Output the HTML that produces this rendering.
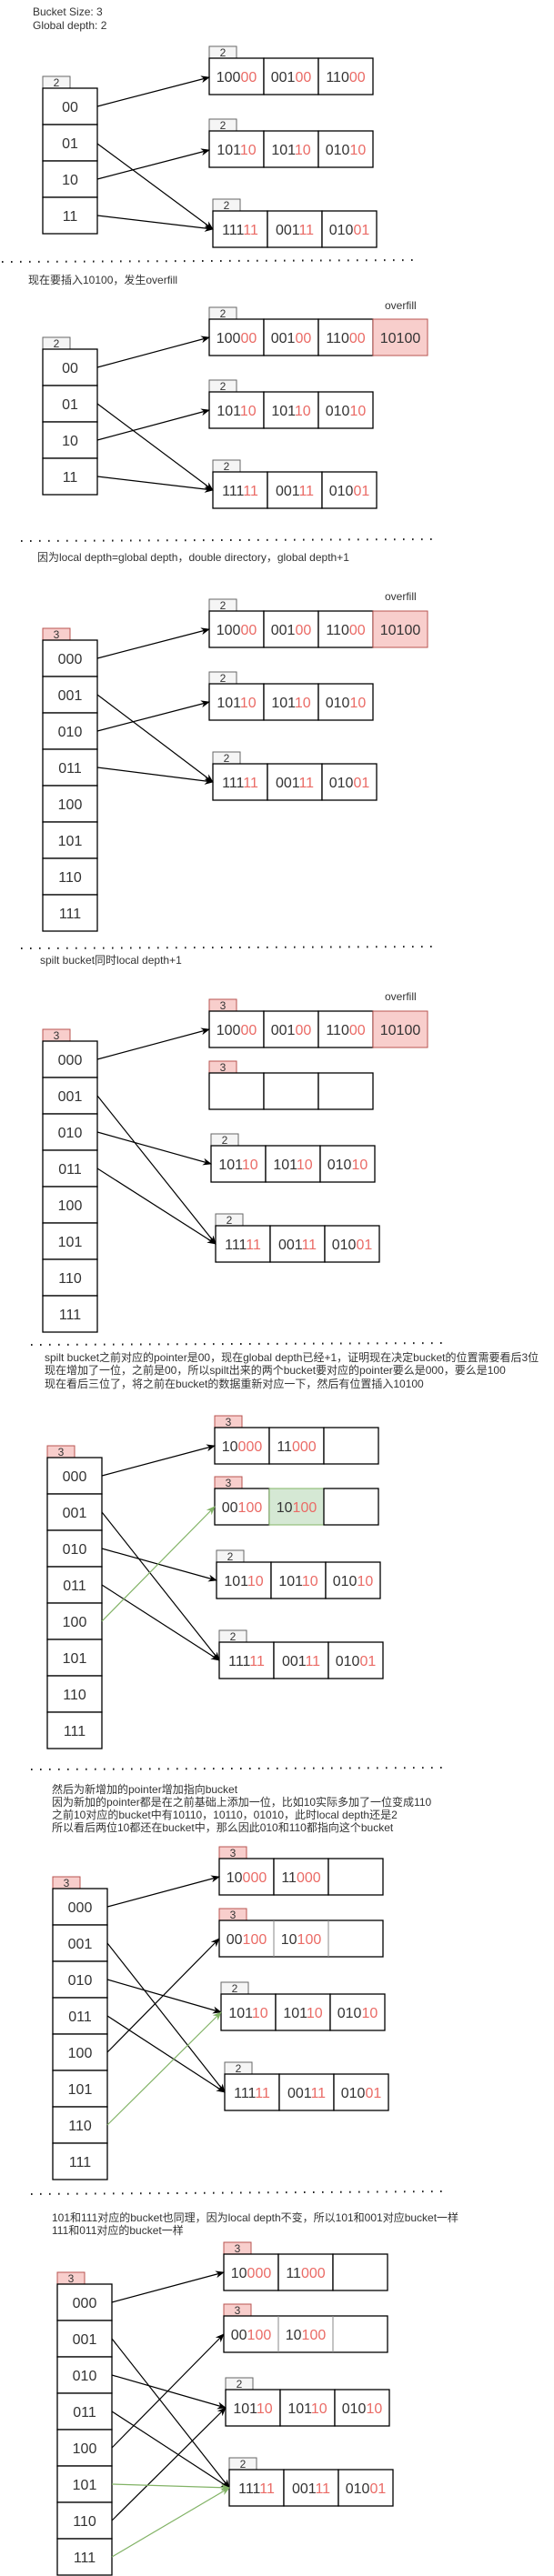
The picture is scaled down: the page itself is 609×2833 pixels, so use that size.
<!DOCTYPE html>
<html><head><meta charset="utf-8"><style>
html,body{margin:0;padding:0;background:#fff;width:609px;height:2833px;overflow:hidden}
svg{display:block}
.c{fill:#fff;stroke:#000;stroke-width:1.3}
.tg{fill:#f5f5f5;stroke:#666;stroke-width:1}
.tp{fill:#f8cecc;stroke:#b85450;stroke-width:1}
.tt{font:12px "Liberation Sans",sans-serif;fill:#333;text-anchor:middle}
.n{font:16px "Liberation Sans",sans-serif;fill:#333;text-anchor:middle}
.r{fill:#ea6b66}
.lb{font:12px "Liberation Sans","Noto Sans CJK SC",sans-serif;fill:#333}
.a{stroke:#000;stroke-width:1.2;fill:none;marker-end:url(#ma)}
.g{stroke:#82b366;stroke-width:1.2;fill:none;marker-end:url(#mg)}
.d{stroke:#222;stroke-width:2;stroke-dasharray:1.6 8.4;fill:none}
</style></head><body>
<svg width="609" height="2833" viewBox="0 0 609 2833" xmlns="http://www.w3.org/2000/svg">
<defs>
<marker id="ma" markerWidth="10" markerHeight="8" refX="9" refY="4" orient="auto" markerUnits="userSpaceOnUse"><path d="M0,0 L10,4 L0,8 L3,4 Z" fill="#000"/></marker>
<marker id="mg" markerWidth="10" markerHeight="8" refX="9" refY="4" orient="auto" markerUnits="userSpaceOnUse"><path d="M0,0 L10,4 L0,8 L3,4 Z" fill="#82b366"/></marker>
</defs>

<!-- Section 1 -->
<text class="lb" x="36" y="17">Bucket Size: 3</text>
<text class="lb" x="36" y="32">Global depth:  2</text>
<g transform="translate(47,97)">
<rect class="tg" x="0" y="-13" width="30" height="13"/><text class="tt" x="15" y="-2">2</text>
<rect class="c" x="0" y="0" width="60" height="40"/><rect class="c" x="0" y="40" width="60" height="40"/><rect class="c" x="0" y="80" width="60" height="40"/><rect class="c" x="0" y="120" width="60" height="40"/>
<text class="n" x="30" y="26">00</text><text class="n" x="30" y="66">01</text><text class="n" x="30" y="106">10</text><text class="n" x="30" y="146">11</text>
</g>
<g transform="translate(230,64)">
<rect class="tg" x="0" y="-13" width="30" height="13"/><text class="tt" x="15" y="-2">2</text>
<rect class="c" x="0" y="0" width="60" height="40"/><rect class="c" x="60" y="0" width="60" height="40"/><rect class="c" x="120" y="0" width="60" height="40"/>
<text class="n" x="30" y="26">100<tspan class="r">00</tspan></text><text class="n" x="90" y="26">001<tspan class="r">00</tspan></text><text class="n" x="150" y="26">110<tspan class="r">00</tspan></text>
</g>
<g transform="translate(230,144)">
<rect class="tg" x="0" y="-13" width="30" height="13"/><text class="tt" x="15" y="-2">2</text>
<rect class="c" x="0" y="0" width="60" height="40"/><rect class="c" x="60" y="0" width="60" height="40"/><rect class="c" x="120" y="0" width="60" height="40"/>
<text class="n" x="30" y="26">101<tspan class="r">10</tspan></text><text class="n" x="90" y="26">101<tspan class="r">10</tspan></text><text class="n" x="150" y="26">010<tspan class="r">10</tspan></text>
</g>
<g transform="translate(234,232)">
<rect class="tg" x="0" y="-13" width="30" height="13"/><text class="tt" x="15" y="-2">2</text>
<rect class="c" x="0" y="0" width="60" height="40"/><rect class="c" x="60" y="0" width="60" height="40"/><rect class="c" x="120" y="0" width="60" height="40"/>
<text class="n" x="30" y="26">111<tspan class="r">11</tspan></text><text class="n" x="90" y="26">001<tspan class="r">11</tspan></text><text class="n" x="150" y="26">010<tspan class="r">01</tspan></text>
</g>
<path class="a" d="M107,117 L230,85"/><path class="a" d="M107,158 L234,252"/><path class="a" d="M107,197 L230,165"/><path class="a" d="M107,237 L234,252"/>
<path class="d" d="M2,288 L460,286"/>

<!-- Section 2 -->
<text class="lb" x="31" y="312">现在要插入10100，发生overfill</text>
<text class="lb" x="423" y="340">overfill</text>
<g transform="translate(47,384)">
<rect class="tg" x="0" y="-13" width="30" height="13"/><text class="tt" x="15" y="-2">2</text>
<rect class="c" x="0" y="0" width="60" height="40"/><rect class="c" x="0" y="40" width="60" height="40"/><rect class="c" x="0" y="80" width="60" height="40"/><rect class="c" x="0" y="120" width="60" height="40"/>
<text class="n" x="30" y="26">00</text><text class="n" x="30" y="66">01</text><text class="n" x="30" y="106">10</text><text class="n" x="30" y="146">11</text>
</g>
<g transform="translate(230,351)">
<rect class="tg" x="0" y="-13" width="30" height="13"/><text class="tt" x="15" y="-2">2</text>
<rect class="c" x="0" y="0" width="60" height="40"/><rect class="c" x="60" y="0" width="60" height="40"/><rect class="c" x="120" y="0" width="60" height="40"/>
<rect x="180" y="0" width="60" height="40" fill="#f8cecc" stroke="#b85450" stroke-width="1"/>
<text class="n" x="30" y="26">100<tspan class="r">00</tspan></text><text class="n" x="90" y="26">001<tspan class="r">00</tspan></text><text class="n" x="150" y="26">110<tspan class="r">00</tspan></text><text class="n" x="210" y="26">10100</text>
</g>
<g transform="translate(230,431)">
<rect class="tg" x="0" y="-13" width="30" height="13"/><text class="tt" x="15" y="-2">2</text>
<rect class="c" x="0" y="0" width="60" height="40"/><rect class="c" x="60" y="0" width="60" height="40"/><rect class="c" x="120" y="0" width="60" height="40"/>
<text class="n" x="30" y="26">101<tspan class="r">10</tspan></text><text class="n" x="90" y="26">101<tspan class="r">10</tspan></text><text class="n" x="150" y="26">010<tspan class="r">10</tspan></text>
</g>
<g transform="translate(234,519)">
<rect class="tg" x="0" y="-13" width="30" height="13"/><text class="tt" x="15" y="-2">2</text>
<rect class="c" x="0" y="0" width="60" height="40"/><rect class="c" x="60" y="0" width="60" height="40"/><rect class="c" x="120" y="0" width="60" height="40"/>
<text class="n" x="30" y="26">111<tspan class="r">11</tspan></text><text class="n" x="90" y="26">001<tspan class="r">11</tspan></text><text class="n" x="150" y="26">010<tspan class="r">01</tspan></text>
</g>
<path class="a" d="M107,404 L230,371"/><path class="a" d="M107,444 L234,539"/><path class="a" d="M107,484 L230,451"/><path class="a" d="M107,524 L234,539"/>
<path class="d" d="M23,595 L482,593"/>

<!-- Section 3 -->
<text class="lb" x="41" y="617">因为local depth=global depth，double directory，global depth+1</text>
<text class="lb" x="423" y="660">overfill</text>
<g transform="translate(47,704)">
<rect class="tp" x="0" y="-13" width="30" height="13"/><text class="tt" x="15" y="-2">3</text>
<rect class="c" x="0" y="0" width="60" height="40"/><rect class="c" x="0" y="40" width="60" height="40"/><rect class="c" x="0" y="80" width="60" height="40"/><rect class="c" x="0" y="120" width="60" height="40"/><rect class="c" x="0" y="160" width="60" height="40"/><rect class="c" x="0" y="200" width="60" height="40"/><rect class="c" x="0" y="240" width="60" height="40"/><rect class="c" x="0" y="280" width="60" height="40"/>
<text class="n" x="30" y="26">000</text><text class="n" x="30" y="66">001</text><text class="n" x="30" y="106">010</text><text class="n" x="30" y="146">011</text><text class="n" x="30" y="186">100</text><text class="n" x="30" y="226">101</text><text class="n" x="30" y="266">110</text><text class="n" x="30" y="306">111</text>
</g>
<g transform="translate(230,672)">
<rect class="tg" x="0" y="-13" width="30" height="13"/><text class="tt" x="15" y="-2">2</text>
<rect class="c" x="0" y="0" width="60" height="40"/><rect class="c" x="60" y="0" width="60" height="40"/><rect class="c" x="120" y="0" width="60" height="40"/>
<rect x="180" y="0" width="60" height="40" fill="#f8cecc" stroke="#b85450" stroke-width="1"/>
<text class="n" x="30" y="26">100<tspan class="r">00</tspan></text><text class="n" x="90" y="26">001<tspan class="r">00</tspan></text><text class="n" x="150" y="26">110<tspan class="r">00</tspan></text><text class="n" x="210" y="26">10100</text>
</g>
<g transform="translate(230,752)">
<rect class="tg" x="0" y="-13" width="30" height="13"/><text class="tt" x="15" y="-2">2</text>
<rect class="c" x="0" y="0" width="60" height="40"/><rect class="c" x="60" y="0" width="60" height="40"/><rect class="c" x="120" y="0" width="60" height="40"/>
<text class="n" x="30" y="26">101<tspan class="r">10</tspan></text><text class="n" x="90" y="26">101<tspan class="r">10</tspan></text><text class="n" x="150" y="26">010<tspan class="r">10</tspan></text>
</g>
<g transform="translate(234,840)">
<rect class="tg" x="0" y="-13" width="30" height="13"/><text class="tt" x="15" y="-2">2</text>
<rect class="c" x="0" y="0" width="60" height="40"/><rect class="c" x="60" y="0" width="60" height="40"/><rect class="c" x="120" y="0" width="60" height="40"/>
<text class="n" x="30" y="26">111<tspan class="r">11</tspan></text><text class="n" x="90" y="26">001<tspan class="r">11</tspan></text><text class="n" x="150" y="26">010<tspan class="r">01</tspan></text>
</g>
<path class="a" d="M107,724 L230,692"/><path class="a" d="M107,764 L234,860"/><path class="a" d="M107,804 L230,772"/><path class="a" d="M107,844 L234,860"/>
<path class="d" d="M23,1043 L482,1041"/>

<!-- Section 4 -->
<text class="lb" x="44" y="1060">spilt bucket同时local depth+1</text>
<text class="lb" x="423" y="1100">overfill</text>
<g transform="translate(47,1145)">
<rect class="tp" x="0" y="-13" width="30" height="13"/><text class="tt" x="15" y="-2">3</text>
<rect class="c" x="0" y="0" width="60" height="40"/><rect class="c" x="0" y="40" width="60" height="40"/><rect class="c" x="0" y="80" width="60" height="40"/><rect class="c" x="0" y="120" width="60" height="40"/><rect class="c" x="0" y="160" width="60" height="40"/><rect class="c" x="0" y="200" width="60" height="40"/><rect class="c" x="0" y="240" width="60" height="40"/><rect class="c" x="0" y="280" width="60" height="40"/>
<text class="n" x="30" y="26">000</text><text class="n" x="30" y="66">001</text><text class="n" x="30" y="106">010</text><text class="n" x="30" y="146">011</text><text class="n" x="30" y="186">100</text><text class="n" x="30" y="226">101</text><text class="n" x="30" y="266">110</text><text class="n" x="30" y="306">111</text>
</g>
<g transform="translate(230,1112)">
<rect class="tp" x="0" y="-13" width="30" height="13"/><text class="tt" x="15" y="-2">3</text>
<rect class="c" x="0" y="0" width="60" height="40"/><rect class="c" x="60" y="0" width="60" height="40"/><rect class="c" x="120" y="0" width="60" height="40"/>
<rect x="180" y="0" width="60" height="40" fill="#f8cecc" stroke="#b85450" stroke-width="1"/>
<text class="n" x="30" y="26">100<tspan class="r">00</tspan></text><text class="n" x="90" y="26">001<tspan class="r">00</tspan></text><text class="n" x="150" y="26">110<tspan class="r">00</tspan></text><text class="n" x="210" y="26">10100</text>
</g>
<g transform="translate(230,1180)">
<rect class="tp" x="0" y="-13" width="30" height="13"/><text class="tt" x="15" y="-2">3</text>
<rect class="c" x="0" y="0" width="60" height="40"/><rect class="c" x="60" y="0" width="60" height="40"/><rect class="c" x="120" y="0" width="60" height="40"/>
</g>
<g transform="translate(232,1260)">
<rect class="tg" x="0" y="-13" width="30" height="13"/><text class="tt" x="15" y="-2">2</text>
<rect class="c" x="0" y="0" width="60" height="40"/><rect class="c" x="60" y="0" width="60" height="40"/><rect class="c" x="120" y="0" width="60" height="40"/>
<text class="n" x="30" y="26">101<tspan class="r">10</tspan></text><text class="n" x="90" y="26">101<tspan class="r">10</tspan></text><text class="n" x="150" y="26">010<tspan class="r">10</tspan></text>
</g>
<g transform="translate(237,1348)">
<rect class="tg" x="0" y="-13" width="30" height="13"/><text class="tt" x="15" y="-2">2</text>
<rect class="c" x="0" y="0" width="60" height="40"/><rect class="c" x="60" y="0" width="60" height="40"/><rect class="c" x="120" y="0" width="60" height="40"/>
<text class="n" x="30" y="26">111<tspan class="r">11</tspan></text><text class="n" x="90" y="26">001<tspan class="r">11</tspan></text><text class="n" x="150" y="26">010<tspan class="r">01</tspan></text>
</g>
<path class="a" d="M107,1165 L230,1132"/><path class="a" d="M107,1205 L237,1368"/><path class="a" d="M107,1245 L232,1280"/><path class="a" d="M107,1285 L237,1368"/>
<path class="d" d="M34,1479 L492,1477"/>

<!-- Section 5 -->
<text class="lb" x="49" y="1497">spilt bucket之前对应的pointer是00，现在global depth已经+1，证明现在决定bucket的位置需要看后3位</text>
<text class="lb" x="49" y="1511">现在增加了一位，之前是00，所以spilt出来的两个bucket要对应的pointer要么是000，要么是100</text>
<text class="lb" x="49" y="1526">现在看后三位了，将之前在bucket的数据重新对应一下，然后有位置插入10100</text>
<g transform="translate(52,1603)">
<rect class="tp" x="0" y="-13" width="30" height="13"/><text class="tt" x="15" y="-2">3</text>
<rect class="c" x="0" y="0" width="60" height="40"/><rect class="c" x="0" y="40" width="60" height="40"/><rect class="c" x="0" y="80" width="60" height="40"/><rect class="c" x="0" y="120" width="60" height="40"/><rect class="c" x="0" y="160" width="60" height="40"/><rect class="c" x="0" y="200" width="60" height="40"/><rect class="c" x="0" y="240" width="60" height="40"/><rect class="c" x="0" y="280" width="60" height="40"/>
<text class="n" x="30" y="26">000</text><text class="n" x="30" y="66">001</text><text class="n" x="30" y="106">010</text><text class="n" x="30" y="146">011</text><text class="n" x="30" y="186">100</text><text class="n" x="30" y="226">101</text><text class="n" x="30" y="266">110</text><text class="n" x="30" y="306">111</text>
</g>
<g transform="translate(236,1570)">
<rect class="tp" x="0" y="-13" width="30" height="13"/><text class="tt" x="15" y="-2">3</text>
<rect class="c" x="0" y="0" width="60" height="40"/><rect class="c" x="60" y="0" width="60" height="40"/><rect class="c" x="120" y="0" width="60" height="40"/>
<text class="n" x="30" y="26">10<tspan class="r">000</tspan></text><text class="n" x="90" y="26">11<tspan class="r">000</tspan></text>
</g>
<g transform="translate(236,1637)">
<rect class="tp" x="0" y="-13" width="30" height="13"/><text class="tt" x="15" y="-2">3</text>
<rect class="c" x="0" y="0" width="60" height="40"/><rect x="60" y="0" width="60" height="40" fill="#d5e8d4" stroke="#82b366" stroke-width="1"/><rect class="c" x="120" y="0" width="60" height="40"/>
<text class="n" x="30" y="26">00<tspan class="r">100</tspan></text><text class="n" x="90" y="26">10<tspan class="r">100</tspan></text>
</g>
<g transform="translate(238,1718)">
<rect class="tg" x="0" y="-13" width="30" height="13"/><text class="tt" x="15" y="-2">2</text>
<rect class="c" x="0" y="0" width="60" height="40"/><rect class="c" x="60" y="0" width="60" height="40"/><rect class="c" x="120" y="0" width="60" height="40"/>
<text class="n" x="30" y="26">101<tspan class="r">10</tspan></text><text class="n" x="90" y="26">101<tspan class="r">10</tspan></text><text class="n" x="150" y="26">010<tspan class="r">10</tspan></text>
</g>
<g transform="translate(241,1806)">
<rect class="tg" x="0" y="-13" width="30" height="13"/><text class="tt" x="15" y="-2">2</text>
<rect class="c" x="0" y="0" width="60" height="40"/><rect class="c" x="60" y="0" width="60" height="40"/><rect class="c" x="120" y="0" width="60" height="40"/>
<text class="n" x="30" y="26">111<tspan class="r">11</tspan></text><text class="n" x="90" y="26">001<tspan class="r">11</tspan></text><text class="n" x="150" y="26">010<tspan class="r">01</tspan></text>
</g>
<path class="a" d="M112,1623 L236,1590"/><path class="a" d="M112,1663 L241,1826"/><path class="a" d="M112,1703 L238,1738"/><path class="a" d="M112,1743 L241,1826"/>
<path class="g" d="M112,1783 L236,1657"/>
<path class="d" d="M34,1946 L492,1944"/>

<!-- Section 6 -->
<text class="lb" x="57" y="1972">然后为新增加的pointer增加指向bucket</text>
<text class="lb" x="57" y="1986">因为新加的pointer都是在之前基础上添加一位，比如10实际多加了一位变成110</text>
<text class="lb" x="57" y="2000">之前10对应的bucket中有10110，10110，01010，此时local depth还是2</text>
<text class="lb" x="57" y="2014">所以看后两位10都还在bucket中，那么因此010和110都指向这个bucket</text>
<g transform="translate(58,2077)">
<rect class="tp" x="0" y="-13" width="30" height="13"/><text class="tt" x="15" y="-2">3</text>
<rect class="c" x="0" y="0" width="60" height="40"/><rect class="c" x="0" y="40" width="60" height="40"/><rect class="c" x="0" y="80" width="60" height="40"/><rect class="c" x="0" y="120" width="60" height="40"/><rect class="c" x="0" y="160" width="60" height="40"/><rect class="c" x="0" y="200" width="60" height="40"/><rect class="c" x="0" y="240" width="60" height="40"/><rect class="c" x="0" y="280" width="60" height="40"/>
<text class="n" x="30" y="26">000</text><text class="n" x="30" y="66">001</text><text class="n" x="30" y="106">010</text><text class="n" x="30" y="146">011</text><text class="n" x="30" y="186">100</text><text class="n" x="30" y="226">101</text><text class="n" x="30" y="266">110</text><text class="n" x="30" y="306">111</text>
</g>
<g transform="translate(241,2044)">
<rect class="tp" x="0" y="-13" width="30" height="13"/><text class="tt" x="15" y="-2">3</text>
<rect class="c" x="0" y="0" width="60" height="40"/><rect class="c" x="60" y="0" width="60" height="40"/><rect class="c" x="120" y="0" width="60" height="40"/>
<text class="n" x="30" y="26">10<tspan class="r">000</tspan></text><text class="n" x="90" y="26">11<tspan class="r">000</tspan></text>
</g>
<g transform="translate(241,2112)">
<rect class="tp" x="0" y="-13" width="30" height="13"/><text class="tt" x="15" y="-2">3</text>
<rect class="c" x="0" y="0" width="180" height="40"/><line x1="60" y1="0" x2="60" y2="40" stroke="#888"/><line x1="120" y1="0" x2="120" y2="40" stroke="#888"/>
<text class="n" x="30" y="26">00<tspan class="r">100</tspan></text><text class="n" x="90" y="26">10<tspan class="r">100</tspan></text>
</g>
<g transform="translate(243,2193)">
<rect class="tg" x="0" y="-13" width="30" height="13"/><text class="tt" x="15" y="-2">2</text>
<rect class="c" x="0" y="0" width="60" height="40"/><rect class="c" x="60" y="0" width="60" height="40"/><rect class="c" x="120" y="0" width="60" height="40"/>
<text class="n" x="30" y="26">101<tspan class="r">10</tspan></text><text class="n" x="90" y="26">101<tspan class="r">10</tspan></text><text class="n" x="150" y="26">010<tspan class="r">10</tspan></text>
</g>
<g transform="translate(247,2281)">
<rect class="tg" x="0" y="-13" width="30" height="13"/><text class="tt" x="15" y="-2">2</text>
<rect class="c" x="0" y="0" width="60" height="40"/><rect class="c" x="60" y="0" width="60" height="40"/><rect class="c" x="120" y="0" width="60" height="40"/>
<text class="n" x="30" y="26">111<tspan class="r">11</tspan></text><text class="n" x="90" y="26">001<tspan class="r">11</tspan></text><text class="n" x="150" y="26">010<tspan class="r">01</tspan></text>
</g>
<path class="a" d="M118,2097 L241,2064"/><path class="a" d="M118,2137 L247,2301"/><path class="a" d="M118,2177 L243,2213"/><path class="a" d="M118,2217 L247,2301"/><path class="a" d="M118,2257 L241,2132"/>
<path class="g" d="M118,2337 L243,2213"/>
<path class="d" d="M34,2413 L492,2410"/>

<!-- Section 7 -->
<text class="lb" x="57" y="2443">101和111对应的bucket也同理，因为local depth不变，所以101和001对应bucket一样</text>
<text class="lb" x="57" y="2457">111和011对应的bucket一样</text>
<g transform="translate(63,2512)">
<rect class="tp" x="0" y="-13" width="30" height="13"/><text class="tt" x="15" y="-2">3</text>
<rect class="c" x="0" y="0" width="60" height="40"/><rect class="c" x="0" y="40" width="60" height="40"/><rect class="c" x="0" y="80" width="60" height="40"/><rect class="c" x="0" y="120" width="60" height="40"/><rect class="c" x="0" y="160" width="60" height="40"/><rect class="c" x="0" y="200" width="60" height="40"/><rect class="c" x="0" y="240" width="60" height="40"/><rect class="c" x="0" y="280" width="60" height="40"/>
<text class="n" x="30" y="26">000</text><text class="n" x="30" y="66">001</text><text class="n" x="30" y="106">010</text><text class="n" x="30" y="146">011</text><text class="n" x="30" y="186">100</text><text class="n" x="30" y="226">101</text><text class="n" x="30" y="266">110</text><text class="n" x="30" y="306">111</text>
</g>
<g transform="translate(246,2479)">
<rect class="tp" x="0" y="-13" width="30" height="13"/><text class="tt" x="15" y="-2">3</text>
<rect class="c" x="0" y="0" width="60" height="40"/><rect class="c" x="60" y="0" width="60" height="40"/><rect class="c" x="120" y="0" width="60" height="40"/>
<text class="n" x="30" y="26">10<tspan class="r">000</tspan></text><text class="n" x="90" y="26">11<tspan class="r">000</tspan></text>
</g>
<g transform="translate(246,2547)">
<rect class="tp" x="0" y="-13" width="30" height="13"/><text class="tt" x="15" y="-2">3</text>
<rect class="c" x="0" y="0" width="180" height="40"/><line x1="60" y1="0" x2="60" y2="40" stroke="#888"/><line x1="120" y1="0" x2="120" y2="40" stroke="#888"/>
<text class="n" x="30" y="26">00<tspan class="r">100</tspan></text><text class="n" x="90" y="26">10<tspan class="r">100</tspan></text>
</g>
<g transform="translate(248,2628)">
<rect class="tg" x="0" y="-13" width="30" height="13"/><text class="tt" x="15" y="-2">2</text>
<rect class="c" x="0" y="0" width="60" height="40"/><rect class="c" x="60" y="0" width="60" height="40"/><rect class="c" x="120" y="0" width="60" height="40"/>
<text class="n" x="30" y="26">101<tspan class="r">10</tspan></text><text class="n" x="90" y="26">101<tspan class="r">10</tspan></text><text class="n" x="150" y="26">010<tspan class="r">10</tspan></text>
</g>
<g transform="translate(252,2716)">
<rect class="tg" x="0" y="-13" width="30" height="13"/><text class="tt" x="15" y="-2">2</text>
<rect class="c" x="0" y="0" width="60" height="40"/><rect class="c" x="60" y="0" width="60" height="40"/><rect class="c" x="120" y="0" width="60" height="40"/>
<text class="n" x="30" y="26">111<tspan class="r">11</tspan></text><text class="n" x="90" y="26">001<tspan class="r">11</tspan></text><text class="n" x="150" y="26">010<tspan class="r">01</tspan></text>
</g>
<path class="a" d="M123,2532 L246,2499"/><path class="a" d="M123,2572 L252,2736"/><path class="a" d="M123,2612 L248,2648"/><path class="a" d="M123,2652 L252,2736"/><path class="a" d="M123,2692 L246,2567"/><path class="a" d="M123,2772 L248,2648"/>
<path class="g" d="M123,2732 L252,2736"/><path class="g" d="M123,2812 L252,2736"/>
</svg>
</body></html>
